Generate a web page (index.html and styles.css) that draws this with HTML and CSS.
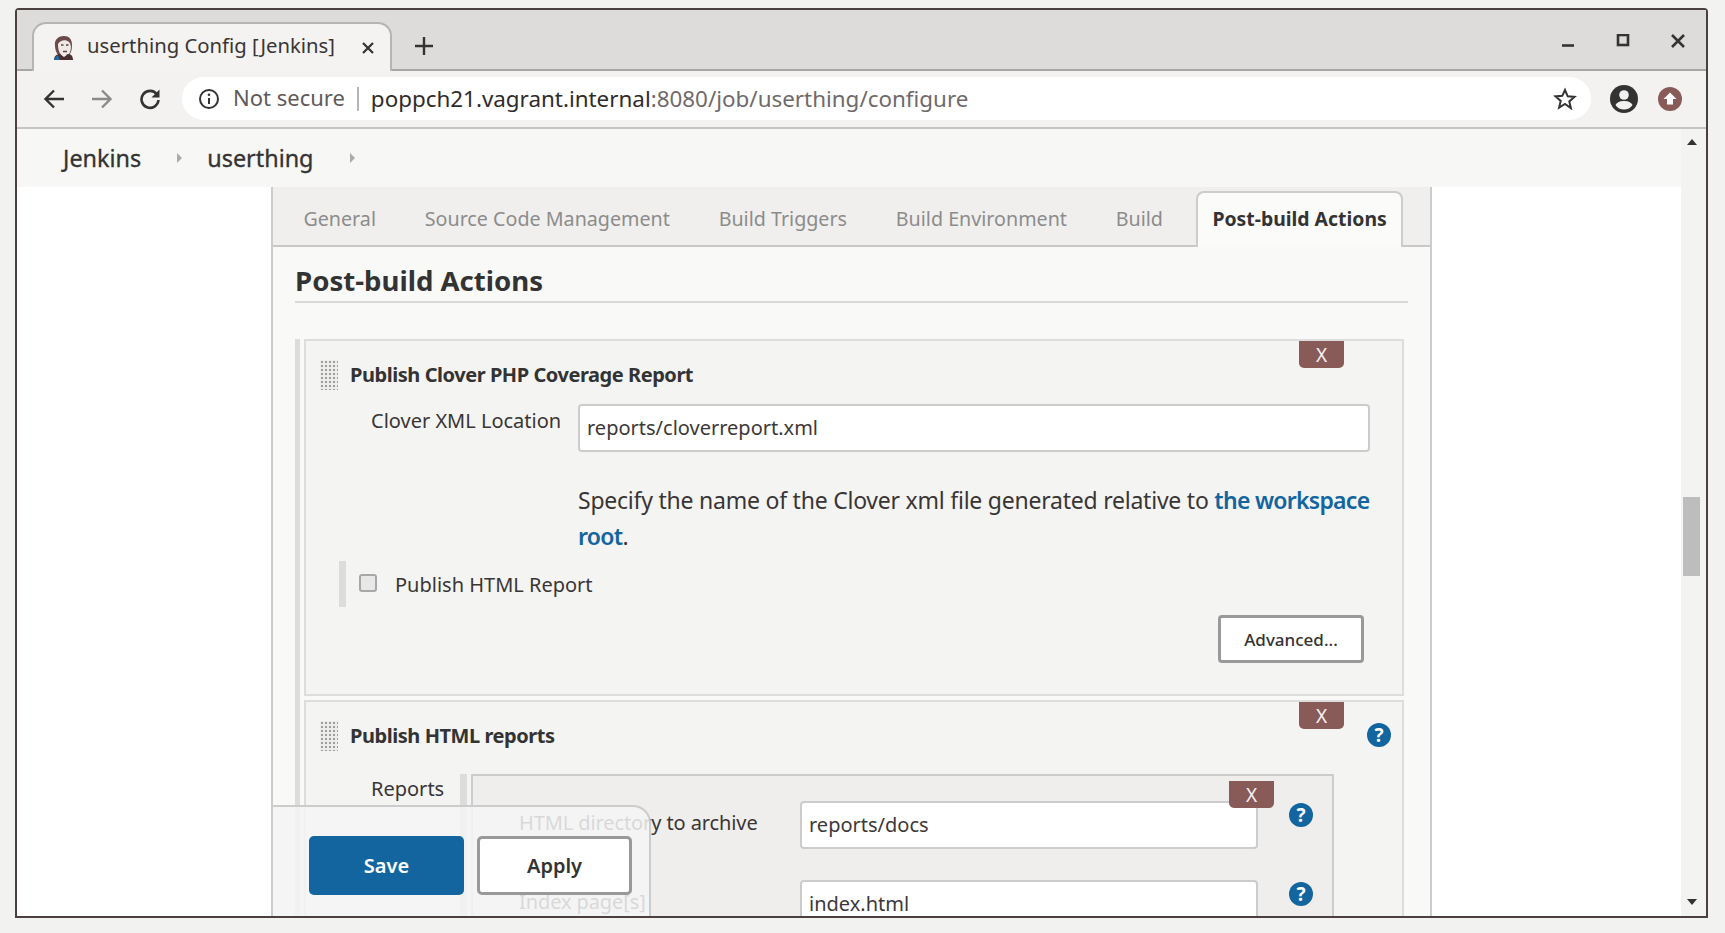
FILE: index.html
```html
<!DOCTYPE html>
<html lang="en">
<head>
    <meta charset="UTF-8">
    <meta name="viewport" content="width=device-width, initial-scale=1.0">
    <title>userthing Config [Jenkins]</title>
    <link rel="stylesheet" href="styles.css">
</head>
<body>
    <div class="window">
        <div class="titlebar">
            <div class="tab">
                <svg class="favicon" width="24" height="26" viewBox="0 0 24 26">
                    <path d="M4 11C3 4 8 1 13 1s8 3 8 9c0 5-1 8-3 10H7C5 17 4 14 4 11z" fill="#6a4a46"/>
                    <path d="M7 9c2-4 8-5 11-2 3 3 2 9 0 12l-6 2c-3-1-5-5-5-12z" fill="#efe9e5"/>
                    <path d="M10 10h2.500M15 10h2.500M12 16.500h4" stroke="#5c4340" stroke-width="1.500"/>
                    <path d="M3 25c0-4 3-6 6-6l4 3 4-3c3 0 5 2 5 6z" fill="#4b2f30"/>
                    <path d="M3 25c0-2 2-4 4-5l2 5z" fill="#1c6aa5"/>
                </svg>
                <span class="tab-title">userthing Config [Jenkins]</span>
                <svg class="tab-close" width="14" height="14" viewBox="0 0 14 14"><path d="M2 2l10 10M12 2L2 12" stroke="#333" stroke-width="2.2"/></svg>
            </div>
            <svg class="new-tab" width="20" height="20" viewBox="0 0 20 20"><path d="M10 1v18M1 10h18" stroke="#333" stroke-width="2.4"/></svg>
            <div class="window-btns">
                <svg width="14" height="14" viewBox="0 0 14 14"><path d="M1 11.5h12" stroke="#333" stroke-width="2.6"/></svg>
                <svg width="14" height="14" viewBox="0 0 14 14"><rect x="2" y="1" width="10" height="10" fill="none" stroke="#333" stroke-width="2.6"/></svg>
                <svg width="14" height="14" viewBox="0 0 14 14"><path d="M1 1l12 12M13 1L1 13" stroke="#333" stroke-width="2.6"/></svg>
            </div>
        </div>
        <div class="toolbar">
            <svg width="22" height="22" viewBox="0 0 22 22"><path d="M21 11H3M11 2.5L2.5 11l8.500 8.500" fill="none" stroke="#333" stroke-width="2.400"/></svg>
            <svg width="22" height="22" viewBox="0 0 22 22"><path d="M1 11h18M11 2.500l8.500 8.500-8.500 8.500" fill="none" stroke="#8d8a8a" stroke-width="2.400"/></svg>
            <svg width="22" height="22" viewBox="0 0 22 22"><path d="M18 6.500A8.500 8.500 0 1 0 19.500 12" fill="none" stroke="#333" stroke-width="2.600"/><path d="M20.500 1.500v8h-8z" fill="#333"/></svg>
            <div class="omnibox">
                <svg width="22" height="22" viewBox="0 0 22 22"><circle cx="11" cy="11" r="9" fill="none" stroke="#333" stroke-width="2"/><path d="M11 10v6" stroke="#333" stroke-width="2"/><circle cx="11" cy="6.800" r="1.300" fill="#333"/></svg>
                <span class="not-secure">Not secure</span>
                <span class="omni-sep"></span>
                <span class="url"><b>poppch21.vagrant.internal</b>:8080/job/userthing/configure</span>
                <svg class="star" width="24" height="24" viewBox="0 0 24 24"><path d="M12 3l2.700 6.300 6.800.6-5.200 4.500 1.600 6.700L12 17l-5.900 3.600 1.600-6.700-5.200-4.500 6.800-.6z" fill="none" stroke="#333" stroke-width="2"/></svg>
            </div>
            <svg class="avatar" width="28" height="28" viewBox="0 0 28 28"><circle cx="14" cy="14" r="14" fill="#333"/><circle cx="14" cy="10" r="4.800" fill="#f3f2f1"/><path d="M5.500 20c2-3.500 5.500-4 8.500-4s6.500.5 8.500 4c-2 3-5 4.500-8.500 4.500S7.500 23 5.500 20z" fill="#f3f2f1"/></svg>
            <svg class="update" width="24" height="24" viewBox="0 0 24 24"><circle cx="12" cy="12" r="12" fill="#885a58"/><path d="M12 5.500l6.500 6.500h-3.500v5.500H9V12H5.500z" fill="#fff"/></svg>
        </div>
        <div class="page">
            <div class="page-main">
                <div class="breadcrumbs">
                    <a class="crumb">Jenkins</a><span class="crumb-arrow"></span>
                    <a class="crumb">userthing</a><span class="crumb-arrow"></span>
                </div>
                <div class="content">
                    <div class="panel">
                        <div class="tabbar">
                            <a class="config-tab">General</a>
                            <a class="config-tab">Source Code Management</a>
                            <a class="config-tab">Build Triggers</a>
                            <a class="config-tab">Build Environment</a>
                            <a class="config-tab">Build</a>
                            <a class="config-tab active">Post-build Actions</a>
                        </div>
                        <h2 class="section-title">Post-build Actions</h2>
                        <div class="actions">
                            <section class="action action-clover">
                                <button class="delete">X</button>
                                <div class="action-head"><span class="handle"></span><h3>Publish Clover PHP Coverage Report</h3></div>
                                <div class="field">
                                    <label class="field-label">Clover XML Location</label>
                                    <div class="text-input clover-input">reports/cloverreport.xml</div>
                                </div>
                                <p class="help-text">Specify the name of the Clover xml file generated relative to <a>the workspace root</a>.</p>
                                <div class="check-row">
                                    <span class="checkbox"></span>
                                    <span>Publish HTML Report</span>
                                </div>
                                <div class="advanced-row"><button class="advanced">Advanced...</button></div>
                            </section>
                            <section class="action">
                                <button class="delete">X</button>
                                <span class="help help-top">?</span>
                                <div class="action-head"><span class="handle"></span><h3>Publish HTML reports</h3></div>
                                <div class="reports">
                                    <label class="reports-label">Reports</label>
                                    <span class="reports-stripe"></span>
                                    <div class="reports-box">
                                        <button class="delete delete-inner">X</button>
                                        <div class="report-row">
                                            <label class="report-label">HTML directory to archive</label>
                                            <div class="text-input report-input">reports/docs</div>
                                            <span class="help">?</span>
                                        </div>
                                        <div class="report-row">
                                            <label class="report-label">Index page[s]</label>
                                            <div class="text-input report-input">index.html</div>
                                            <span class="help">?</span>
                                        </div>
                                    </div>
                                </div>
                            </section>
                        </div>
                    </div>
                    <div class="bottom-bar">
                        <button class="btn btn-save">Save</button>
                        <button class="btn btn-apply">Apply</button>
                    </div>
                </div>
            </div>
            <div class="scrollbar">
                <span class="arrow-up"></span>
                <span class="thumb"></span>
                <span class="arrow-down"></span>
            </div>
        </div>
    </div>
</body>
</html>
```

FILE: styles.css
```css
html, body {
    margin: 0;
    height: 933px;
    overflow: hidden;
}
body {
    background-color: #f2f2f0;
    font-family: "Noto Sans", sans-serif;
    color: #333;
}
button {
    font-family: inherit;
    cursor: pointer;
}
h2, h3, p {
    margin: 0;
}

/* browser window */
.window {
    margin: 8px 0 0 15px;
    width: 1693px;
    height: 910px;
    box-sizing: border-box;
    border: 2px solid #4a4040;
    border-radius: 4px 4px 0 0;
    display: flex;
    flex-direction: column;
    background-color: #fff;
}
.titlebar {
    height: 61px;
    box-sizing: border-box;
    flex: none;
    display: flex;
    align-items: flex-end;
    background-color: #dedcda;
    border-bottom: 2px solid #a6a6a6;
    padding-left: 15px;
}
.tab {
    width: 324px;
    height: 47px;
    margin-bottom: -2px;
    padding: 0 15px 0 17px;
    display: flex;
    align-items: center;
    background-color: #f4f3f2;
    border: 2px solid #b5b5b5;
    border-bottom: 0;
    border-radius: 14px 14px 0 0;
}
.favicon {
    flex: none;
}
.tab-title {
    margin: -6px 0 0 12px;
    font-size: 20.300px;
    color: #3a3535;
    white-space: nowrap;
}
.tab-close {
    margin-left: auto;
}
.new-tab {
    margin: 0 0 13px 22px;
}
.window-btns {
    margin-left: auto;
    margin-right: 21px;
    align-self: flex-start;
    margin-top: 24px;
    display: flex;
    gap: 41px;
}

.toolbar {
    height: 58px;
    box-sizing: border-box;
    flex: none;
    display: flex;
    align-items: center;
    gap: 26px;
    padding: 0 0 0 26px;
    background-color: #f3f2f1;
    border-bottom: 2px solid #c4c4c4;
}
.omnibox {
    width: 1409px;
    height: 43px;
    box-sizing: border-box;
    margin: -1px -7px 0 -5px;
    padding: 0 14px 0 16px;
    display: flex;
    align-items: center;
    background-color: #fff;
    border-radius: 22px;
}
.not-secure {
    margin: -3px 0 0 13px;
    font-size: 22px;
    color: #5f5a5a;
}
.omni-sep {
    width: 2px;
    height: 24px;
    margin: 0 12px 0 12px;
    background-color: #b5b5b5;
}
.url {
    margin-top: -1px;
    font-size: 22.400px;
    color: #6f6a6a;
    white-space: nowrap;
}
.url b {
    font-weight: 400;
    color: #2f2b2b;
}
.star {
    margin-left: auto;
}
.update {
    margin-left: -6px;
}

/* page */
.page {
    flex: 1;
    min-height: 0;
    display: flex;
}
.page-main {
    flex: 1;
    min-width: 0;
    display: flex;
    flex-direction: column;
}
.breadcrumbs {
    height: 58px;
    flex: none;
    display: flex;
    align-items: center;
    padding-left: 46px;
    background-color: #f7f7f6;
}
.crumb {
    font-size: 23.400px;
    -webkit-text-stroke: 0.3px #333;
    color: #333;
}
.crumb-arrow {
    width: 0;
    height: 0;
    margin: 0 25px 0 36px;
    border-left: 5px solid #aaa;
    border-top: 5px solid transparent;
    border-bottom: 5px solid transparent;
}
.content {
    flex: 1;
    min-height: 0;
    position: relative;
    overflow: hidden;
    padding-left: 254px;
}
.panel {
    width: 1161px;
    height: 100%;
    box-sizing: border-box;
    background-color: #f9f9f8;
    border-left: 2px solid #ccc;
    border-right: 2px solid #ccc;
}
.tabbar {
    height: 60px;
    box-sizing: border-box;
    display: flex;
    align-items: flex-end;
    padding-left: 6px;
    background-color: #f0efed;
    border-bottom: 2px solid #c8c8c8;
}
.config-tab {
    height: 58px;
    padding: 0 24.400px;
    line-height: 64px;
    font-size: 19.700px;
    color: #8c8c8c;
    white-space: nowrap;
}
.config-tab.active {
    height: 54px;
    margin-bottom: -2px;
    margin-left: 8.500px;
    padding: 0 14.500px;
    line-height: 52px;
    font-size: 19.400px;
    font-weight: 700;
    color: #333;
    background-color: #fbfbfa;
    border: 2px solid #ccc;
    border-bottom: 0;
    border-radius: 8px 8px 0 0;
}
.section-title {
    margin: 0 22px 0 22px;
    padding-top: 13px;
    height: 41px;
    line-height: 40px;
    font-size: 27.600px;
    font-weight: 700;
    border-bottom: 2px solid #d8d8d8;
}
.actions {
    margin: 36px 0 0 22px;
    padding-left: 4px;
    border-left: 5px solid #dcdcdc;
    width: 1100px;
}
.action {
    position: relative;
    margin-bottom: 4px;
    background-color: #f4f4f3;
    border: 2px solid #ddd;
}
.action-clover {
    padding-bottom: 31px;
}
.delete {
    position: absolute;
    top: 0;
    right: 58px;
    width: 45px;
    height: 27px;
    padding: 0;
    border: 0;
    border-radius: 0 0 5px 5px;
    background-color: #885a58;
    color: #f5f0f0;
    font-size: 19px;
}
.action-head {
    display: flex;
    align-items: center;
    padding: 19px 0 0 14px;
}
.handle {
    width: 18px;
    height: 30px;
    margin-right: 12px;
    background-color: #ececea;
    background-image: radial-gradient(circle, #9e9e9e 1px, transparent 1.200px);
    background-size: 4px 4px;
}
h3 {
    font-size: 20px;
    font-weight: 700;
    line-height: 30px;
    letter-spacing: -0.450px;
}
.field {
    display: flex;
    margin-top: 14px;
}
.field-label {
    width: 207px;
    margin-left: 65px;
    font-size: 20px;
    line-height: 34px;
    color: #3a3535;
}
.text-input {
    box-sizing: border-box;
    height: 48px;
    padding: 0 7px;
    line-height: 44px;
    font-size: 20px;
    color: #3d3838;
    background-color: #fff;
    border: 2px solid #ccc;
    border-radius: 4px;
    overflow: hidden;
}
.clover-input {
    width: 792px;
}
.help-text {
    width: 800px;
    margin: 30px 0 0 272px;
    font-size: 23px;
    letter-spacing: -0.230px;
    line-height: 36px;
    color: #3a3535;
}
.help-text a {
    font-weight: 600;
    letter-spacing: -0.720px;
    color: #13659f;
}
.check-row {
    height: 46px;
    margin: 7px 0 0 33px;
    padding-left: 13px;
    display: flex;
    align-items: center;
    border-left: 7px solid #dcdcdc;
    font-size: 20px;
    color: #3a3535;
}
.checkbox {
    width: 14px;
    height: 14px;
    margin: -3px 18px 0 0;
    background-color: #e8e8e8;
    border: 2px solid #a8a8a8;
    border-radius: 3px;
}
.advanced-row {
    display: flex;
    justify-content: flex-end;
    margin: 8px 38px 0 0;
}
.advanced {
    width: 146px;
    height: 48px;
    padding: 0;
    font-size: 17px;
    font-weight: 500;
    color: #333;
    background-color: #fff;
    border: 3px solid #999;
    border-radius: 4px;
}
.help {
    width: 24px;
    height: 24px;
    flex: none;
    border-radius: 50%;
    background-color: #13659f;
    color: #fff;
    font-size: 19px;
    font-weight: 700;
    line-height: 24px;
    text-align: center;
}
.help-top {
    position: absolute;
    top: 21px;
    right: 11px;
}
.reports {
    display: flex;
    margin: 23px 0 0 65px;
}
.reports-label {
    width: 89px;
    font-size: 20px;
    line-height: 30px;
    color: #3a3535;
}
.reports-stripe {
    width: 7px;
    margin-right: 4px;
    background-color: #dcdcdc;
}
.reports-box {
    position: relative;
    width: 863px;
    box-sizing: border-box;
    padding: 25px 0 0 46px;
    background-color: #efeeed;
    border: 2px solid #ccc;
}
.delete-inner {
    top: 5px;
    right: 58px;
}
.report-row {
    display: flex;
    align-items: flex-start;
    margin-bottom: 31px;
}
.report-label {
    width: 281px;
    font-size: 20px;
    letter-spacing: -0.100px;
    line-height: 44px;
    color: #3a3535;
}
.report-input {
    width: 458px;
    margin-right: 31px;
}
.report-row .help {
    margin-top: 2px;
}

/* save bar */
.bottom-bar {
    position: absolute;
    left: 254px;
    bottom: 0;
    width: 380px;
    height: 111px;
    box-sizing: border-box;
    padding: 29px 0 0 36px;
    display: flex;
    align-items: flex-start;
    gap: 13px;
    background-color: rgba(245, 245, 244, 0.85);
    border: 2px solid #ccc;
    border-bottom: 0;
    border-radius: 0 18px 0 0;
}
.btn {
    width: 155px;
    height: 59px;
    padding: 0;
    font-size: 20px;
    font-weight: 600;
    border-radius: 5px;
}
.btn-save {
    color: #fff;
    background-color: #13659f;
    border: 0;
}
.btn-apply {
    color: #333;
    background-color: #fff;
    border: 3px solid #999;
}

/* scrollbar */
.scrollbar {
    width: 25px;
    flex: none;
    position: relative;
    background-color: #f3f3f2;
}
.arrow-up, .arrow-down {
    position: absolute;
    left: 6px;
    width: 0;
    height: 0;
    border-left: 5px solid transparent;
    border-right: 5px solid transparent;
}
.arrow-up {
    top: 10px;
    border-bottom: 6px solid #333;
}
.arrow-down {
    bottom: 11px;
    border-top: 6px solid #333;
}
.thumb {
    position: absolute;
    top: 368px;
    left: 2px;
    width: 17px;
    height: 79px;
    background-color: #bdbdbd;
}
```
